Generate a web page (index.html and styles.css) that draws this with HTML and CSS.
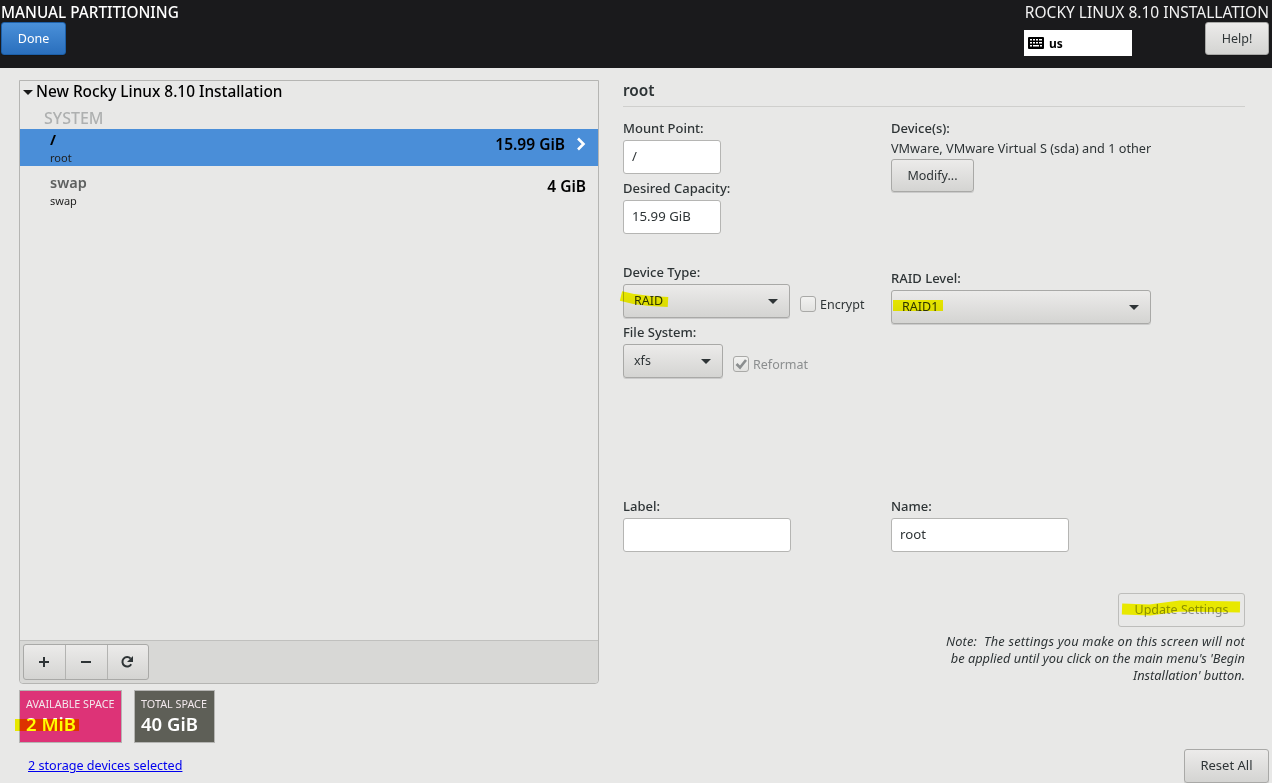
FILE: index.html
```html
<!DOCTYPE html>
<html lang="en">
<head>
<meta charset="utf-8">
<title>Manual Partitioning</title>
<link rel="stylesheet" href="styles.css">
</head>
<body>
<div class="app">
  <header class="topbar">
    <div class="top-left">
      <div class="top-title">MANUAL PARTITIONING</div>
      <button class="btn btn-done">Done</button>
    </div>
    <div class="top-right">
      <div class="top-title">ROCKY LINUX 8.10 INSTALLATION</div>
      <div class="top-tools">
        <div class="kbd">
          <svg class="kbd-icon" width="16" height="12" viewBox="0 0 16 12"><rect width="16" height="12" rx="1" fill="#000"/><g fill="#fff"><rect x="2" y="2" width="2" height="1.5"/><rect x="5" y="2" width="2" height="1.5"/><rect x="8" y="2" width="2" height="1.5"/><rect x="11" y="2" width="3" height="1.5"/><rect x="2" y="5" width="2" height="1.5"/><rect x="5" y="5" width="2" height="1.5"/><rect x="8" y="5" width="2" height="1.5"/><rect x="11" y="5" width="3" height="1.5"/><rect x="2" y="8" width="2" height="1.5"/><rect x="5" y="8" width="6" height="1.5"/><rect x="12" y="8" width="2" height="1.5"/></g></svg>
          <span>us</span>
        </div>
        <button class="btn btn-help">Help!</button>
      </div>
    </div>
  </header>

  <main class="content">
    <section class="left">
      <div class="panel">
        <div class="tree-head"><span class="tri"></span>New Rocky Linux 8.10 Installation</div>
        <div class="group">SYSTEM</div>
        <div class="mount selected">
          <div class="mount-info"><div class="mount-name">/</div><div class="mount-sub">root</div></div>
          <div class="mount-size">15.99 GiB
            <svg class="chev" width="10" height="14" viewBox="0 0 10 14"><path d="M2 1.5 7.5 7 2 12.5" fill="none" stroke="#fff" stroke-width="2.6"/></svg>
          </div>
        </div>
        <div class="mount">
          <div class="mount-info"><div class="mount-name dim">swap</div><div class="mount-sub">swap</div></div>
          <div class="mount-size plain">4 GiB</div>
        </div>
        <div class="toolbar">
          <div class="tool-group">
            <button class="tool"><svg width="12" height="12" viewBox="0 0 12 12"><path d="M6 1v10M1 6h10" stroke="#2e3436" stroke-width="2"/></svg></button>
            <button class="tool"><svg width="12" height="12" viewBox="0 0 12 12"><path d="M1 6h10" stroke="#2e3436" stroke-width="2"/></svg></button>
            <button class="tool"><svg width="14" height="14" viewBox="0 0 14 14"><path d="M11.2 9.2A4.7 4.7 0 1 1 10.6 3.6" fill="none" stroke="#2e3436" stroke-width="2"/><path d="M13 1v6H7z" fill="#2e3436"/></svg></button>
          </div>
        </div>
      </div>
      <div class="tiles">
        <div class="tile tile-avail"><div class="tile-label">AVAILABLE SPACE</div><div class="tile-value">2 MiB</div></div>
        <div class="tile tile-total"><div class="tile-label">TOTAL SPACE</div><div class="tile-value">40 GiB</div></div>
      </div>
      <a class="devices-link" href="#">2 storage devices selected</a>
    </section>

    <section class="right">
      <h2 class="detail-title">root</h2>
      <div class="form-row row-top">
        <div class="col">
          <label class="lbl">Mount Point:</label>
          <div class="input input-s">/</div>
          <label class="lbl lbl-next">Desired Capacity:</label>
          <div class="input input-s">15.99 GiB</div>
        </div>
        <div class="col">
          <label class="lbl">Device(s):</label>
          <div class="dev-text">VMware, VMware Virtual S (sda) and 1 other</div>
          <button class="btn btn-modify">Modify...</button>
        </div>
      </div>
      <div class="form-row row-type">
        <div class="col">
          <label class="lbl">Device Type:</label>
          <div class="inline">
            <div class="select sel-type"><span>RAID</span><i class="caret"></i></div>
            <span class="check"></span><span class="check-text">Encrypt</span>
          </div>
          <label class="lbl lbl-next">File System:</label>
          <div class="inline">
            <div class="select sel-fs"><span>xfs</span><i class="caret"></i></div>
            <span class="check checked"><svg width="14" height="14" viewBox="0 0 14 14"><path d="M2.5 7 6 10.5 12 3" fill="none" stroke="#8b8e8f" stroke-width="2.6"/></svg></span><span class="check-text muted">Reformat</span>
          </div>
        </div>
        <div class="col col-raid">
          <label class="lbl">RAID Level:</label>
          <div class="select sel-raid"><span>RAID1</span><i class="caret"></i></div>
        </div>
      </div>
      <div class="form-row row-name">
        <div class="col">
          <label class="lbl">Label:</label>
          <div class="input input-l"></div>
        </div>
        <div class="col">
          <label class="lbl">Name:</label>
          <div class="input input-n">root</div>
        </div>
      </div>
      <div class="update-row"><button class="btn btn-update">Update Settings</button></div>
      <p class="note"><span class="note-first">Note:&nbsp; The settings you make on this screen will not</span><br>be applied until you click on the main menu's 'Begin<br>Installation' button.</p>
    </section>
  </main>
  <button class="btn btn-reset">Reset All</button>

  <svg class="marks" width="1272" height="783" viewBox="0 0 1272 783" aria-hidden="true">
    <path d="M621 296 L634 299 L650 301 L668 302" fill="none" stroke="#ffff00" stroke-width="10"/>
    <rect x="893" y="300" width="50" height="11" fill="#ffff00"/>
    <path d="M1122 609 L1150 610 L1180 606 L1240 607" fill="none" stroke="#ffff00" stroke-width="11"/>
    <rect x="15" y="719" width="64" height="12" fill="#ffff00"/>
  </svg>
</div>
</body>
</html>
```
FILE: styles.css
```css
* { box-sizing: border-box; }
html, body { margin: 0; padding: 0; }
body { font-family: "Noto Sans", "Open Sans", sans-serif; font-size: 12.5px; color: #2e3436; }
.app { position: relative; width: 1272px; height: 783px; background: #e8e8e7; overflow: hidden; display: flex; flex-direction: column; }

.topbar { height: 68px; background: #1a1a1c; display: flex; justify-content: space-between; color: #fff; flex: none; }
.top-left { padding: 2px 0 0 1px; }
.top-right { padding: 2px 3px 0 0; display: flex; flex-direction: column; align-items: flex-end; }
.top-title { font-size: 15.5px; line-height: 20px; height: 20px; color: #f2f2f2; white-space: nowrap; }
.top-left .top-title { font-size: 15.3px; font-weight: 500; color: #fff; }
.top-tools { display: flex; width: 245px; justify-content: space-between; }
.kbd { width: 108px; height: 26px; margin-top: 8px; background: #fff; color: #000; display: flex; align-items: center; padding-left: 4px; font-weight: 700; font-size: 12px; }
.kbd-icon { margin-right: 5px; }

.btn { font: inherit; font-size: 12.5px; display: block; border: 1px solid #a9a9a7; border-radius: 3px; background: linear-gradient(#ecebea, #d4d4d2); color: #2e3436; padding: 0; box-shadow: 0 1px 0 rgba(0,0,0,.12); }
.btn-done { width: 65px; height: 33px; border-color: #1c5fa8; background: linear-gradient(#4a90d9, #2a6fbd); color: #fff; }
.btn-help { width: 64px; height: 33px; }
.btn-modify { width: 83px; height: 33px; margin-top: 3px; }
.btn-update { width: 127px; height: 34px; padding-bottom: 2px; color: #8b8e8f; background: #e8e8e7; box-shadow: none; border-color: #bdbdbb; }
.btn-reset { position: absolute; left: 1184px; top: 749px; width: 85px; height: 34px; padding-bottom: 2px; font-size: 13px; }

.content { display: flex; flex: 1; min-height: 0; padding: 12px 27px 0 19px; }
.left { width: 580px; display: flex; flex-direction: column; flex: none; }
.panel { height: 604px; border: 1px solid #b5b5b3; border-radius: 0 0 4px 4px; display: flex; flex-direction: column; }
.tree-head { height: 20px; padding: 2px 0 0 3px; font-size: 15.4px; font-weight: 500; color: #000; line-height: 18px; display: flex; align-items: center; white-space: nowrap; }
.tri { width: 0; height: 0; border: 5px solid transparent; border-top: 5px solid #1a1a1a; border-bottom: 0; margin-right: 3px; }
.group { height: 28px; padding: 6px 0 0 24px; font-size: 16px; font-weight: 500; color: #aeb0b0; line-height: 22px; }
.mount { height: 37px; padding: 0 12px 0 30px; display: flex; justify-content: space-between; color: #000; }
.mount + .mount { height: 43px; padding-top: 6px; }
.mount.selected { background: #4a8ed8; }
.mount-name { font-size: 14.5px; font-weight: 700; line-height: 20px; color: #000; }
.mount-name.dim { color: #5e6060; font-weight: 600; }
.mount-sub { font-size: 11px; line-height: 14px; margin-top: 2px; color: #1e1e1e; }
.mount-size { font-size: 15.5px; font-weight: 600; display: flex; align-items: center; height: 30px; }
.mount-size.plain { line-height: 20px; height: 20px; margin-top: 4px; }
.chev { margin-left: 11px; }
.toolbar { margin-top: auto; height: 43px; border-top: 1px solid #c0c0be; background: #d8d8d6; padding: 3px; border-radius: 0 0 4px 4px; }
.tool-group { display: inline-flex; border: 1px solid #a9a9a7; border-radius: 3px; background: linear-gradient(#ecebea, #d4d4d2); height: 36px; }
.tool { width: 42px; border: 0; border-right: 1px solid #b3b3b1; background: none; padding: 0 1px 0 0; display: flex; align-items: center; justify-content: center; }
.tool:last-child { border-right: 0; width: 40px; padding-right: 2px; }

.tiles { display: flex; gap: 12px; margin-top: 6px; }
.tile { height: 53px; border: 1px solid #b5b5b3; color: #fff; padding: 6px 6px 0; }
.tile-avail { width: 103px; background: #dd3377; }
.tile-total { width: 81px; background: #5e5f57; }
.tile-label { font-size: 10.8px; line-height: 14px; white-space: nowrap; color: #f2e8ec; }
.tile-value { font-size: 18.5px; font-weight: 600; line-height: 20px; margin-top: 3px; white-space: nowrap; }
.devices-link { margin: 15px 0 0 9px; font-size: 12.6px; color: #0000ee; line-height: 16px; }

.right { margin-left: 24px; width: 622px; flex: none; }
.detail-title { margin: 0; height: 27px; padding-top: 1px; font-size: 15.4px; font-weight: 600; line-height: 20px; border-bottom: 1px solid #cfcfcd; color: #2e3436; }
.form-row { display: flex; }
.col { width: 268px; flex: none; }
.lbl { display: block; font-size: 13px; line-height: 14px; margin-bottom: 5px; color: #2e3436; font-weight: 500; }
.lbl-next { margin-top: 7px; }
.row-top { margin-top: 14px; height: 131px; }
.row-type { margin-top: 13px; height: 234px; }
.col-raid { padding-top: 6px; }
.row-name { height: 94px; }
.input { background: #fff; border: 1px solid #b5b5b3; border-radius: 3px; height: 34px; line-height: 30px; padding-left: 8px; font-size: 13.2px; color: #2e3436; }
.input-s { width: 98px; }
.input-l { width: 168px; }
.input-n { width: 178px; }
.dev-text { font-size: 12.7px; line-height: 16px; margin-top: 3px; white-space: nowrap; }
.row-top .btn-modify { margin-top: 3px; }
.inline { display: flex; align-items: center; }
.select { height: 34px; border: 1px solid #a9a9a7; border-radius: 3px; background: linear-gradient(#ecebea, #d4d4d2); display: flex; align-items: center; justify-content: space-between; padding: 0 11px 2px 10px; box-shadow: 0 1px 0 rgba(0,0,0,.12); }
.sel-type { width: 167px; }
.sel-fs { width: 100px; }
.sel-raid { width: 260px; }
.caret { width: 0; height: 0; border: 5.5px solid transparent; border-top: 5.5px solid #2e3436; border-bottom: 0; margin-top: 2px; }
.check { width: 16px; height: 16px; border: 1px solid #a9a9a7; border-radius: 3px; background: linear-gradient(#f2f2f1, #e2e2e0); margin: 6px 4px 0 10px; display: flex; align-items: center; justify-content: center; }
.check-text { font-size: 12.5px; margin-top: 6px; }
.muted { color: #8b8e8f; }
.update-row { display: flex; justify-content: flex-end; }
.note { margin: 6px 0 0; text-align: right; font-style: italic; font-size: 12.8px; line-height: 17px; color: #2e3436; white-space: nowrap; }
.note-first { letter-spacing: .2px; }
.marks { position: absolute; left: 0; top: 0; mix-blend-mode: multiply; pointer-events: none; }
```
